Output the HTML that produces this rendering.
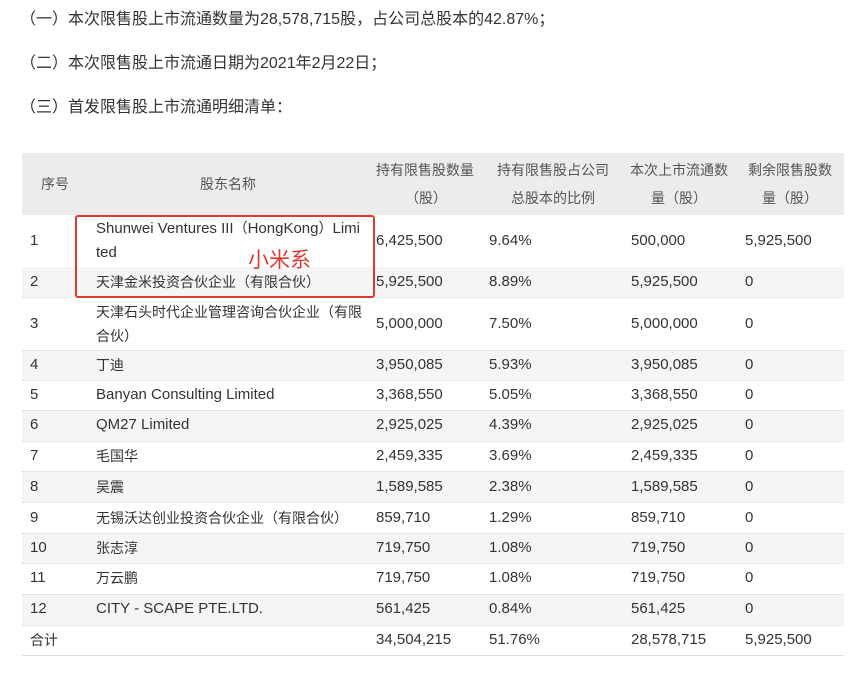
<!DOCTYPE html>
<html><head><meta charset="utf-8"><style>
body{margin:0;width:866px;height:678px;background:#fff;font-family:"Liberation Sans","Noto Sans CJK SC",sans-serif;color:#333;position:relative;overflow:hidden}
.p{position:absolute;left:20px;font-size:16px;line-height:20px;white-space:nowrap}
.bg{position:absolute;left:22px;width:822px}
.t{position:absolute;font-size:15px;line-height:26px;white-space:nowrap}
.c{font-size:14px}
.h{font-size:14px;color:#555}
.sep{position:absolute;left:22px;width:822px;border-top:1px dotted #d8d8d8}
</style></head><body>
<div class="p" style="top:10px">（一）本次限售股上市流通数量为28,578,715股，占公司总股本的42.87%；</div>
<div class="p" style="top:54px">（二）本次限售股上市流通日期为2021年2月22日；</div>
<div class="p" style="top:98px">（三）首发限售股上市流通明细清单：</div>

<div class="bg" style="top:153px;height:62px;background:#ececec"></div>
<div class="bg" style="top:267px;height:30px;background:#f5f5f5"></div>
<div class="bg" style="top:350px;height:30px;background:#f5f5f5"></div>
<div class="bg" style="top:410px;height:31px;background:#f5f5f5"></div>
<div class="bg" style="top:471px;height:31px;background:#f5f5f5"></div>
<div class="bg" style="top:533px;height:30px;background:#f5f5f5"></div>
<div class="bg" style="top:594px;height:31px;background:#f5f5f5"></div>
<div class="sep" style="top:297px"></div><div class="sep" style="top:350px"></div><div class="sep" style="top:380px"></div><div class="sep" style="top:410px"></div><div class="sep" style="top:441px"></div><div class="sep" style="top:471px"></div><div class="sep" style="top:502px"></div><div class="sep" style="top:533px"></div><div class="sep" style="top:563px"></div><div class="sep" style="top:594px"></div><div class="sep" style="top:625px"></div>
<div class="bg" style="top:655px;border-top:1px solid #ddd"></div>

<div class="t h" style="left:41px;top:171px">序号</div>
<div class="t h" style="left:200px;top:171px">股东名称</div>
<div class="t h" style="left:376px;top:157px">持有限售股数量</div>
<div class="t h" style="left:405px;top:185px">（股）</div>
<div class="t h" style="left:497px;top:157px">持有限售股占公司</div>
<div class="t h" style="left:511px;top:185px">总股本的比例</div>
<div class="t h" style="left:630px;top:157px">本次上市流通数</div>
<div class="t h" style="left:651px;top:185px">量（股）</div>
<div class="t h" style="left:748px;top:157px">剩余限售股数</div>
<div class="t h" style="left:762px;top:185px">量（股）</div>

<div class="t" style="left:30px;top:228px">1</div>
<div class="t" style="left:96px;top:216px;line-height:24px">Shunwei Ventures III<span class="c">（</span>HongKong<span class="c">）</span>Limi<br>ted</div>
<div class="t" style="left:376px;top:228px">6,425,500</div><div class="t" style="left:489px;top:228px">9.64%</div><div class="t" style="left:631px;top:228px">500,000</div><div class="t" style="left:745px;top:228px">5,925,500</div>

<div class="t" style="left:30px;top:269px">2</div><div class="t c" style="left:96px;top:269px">天津金米投资合伙企业（有限合伙）</div>
<div class="t" style="left:376px;top:269px">5,925,500</div><div class="t" style="left:489px;top:269px">8.89%</div><div class="t" style="left:631px;top:269px">5,925,500</div><div class="t" style="left:745px;top:269px">0</div>

<div class="t" style="left:30px;top:311px">3</div>
<div class="t c" style="left:96px;top:300px;line-height:24px">天津石头时代企业管理咨询合伙企业（有限<br>合伙）</div>
<div class="t" style="left:376px;top:311px">5,000,000</div><div class="t" style="left:489px;top:311px">7.50%</div><div class="t" style="left:631px;top:311px">5,000,000</div><div class="t" style="left:745px;top:311px">0</div>

<div class="t" style="left:30px;top:352px">4</div><div class="t c" style="left:96px;top:352px">丁迪</div><div class="t" style="left:376px;top:352px">3,950,085</div><div class="t" style="left:489px;top:352px">5.93%</div><div class="t" style="left:631px;top:352px">3,950,085</div><div class="t" style="left:745px;top:352px">0</div>
<div class="t" style="left:30px;top:382px">5</div><div class="t" style="left:96px;top:382px">Banyan Consulting Limited</div><div class="t" style="left:376px;top:382px">3,368,550</div><div class="t" style="left:489px;top:382px">5.05%</div><div class="t" style="left:631px;top:382px">3,368,550</div><div class="t" style="left:745px;top:382px">0</div>
<div class="t" style="left:30px;top:412px">6</div><div class="t" style="left:96px;top:412px">QM27 Limited</div><div class="t" style="left:376px;top:412px">2,925,025</div><div class="t" style="left:489px;top:412px">4.39%</div><div class="t" style="left:631px;top:412px">2,925,025</div><div class="t" style="left:745px;top:412px">0</div>
<div class="t" style="left:30px;top:443px">7</div><div class="t c" style="left:96px;top:443px">毛国华</div><div class="t" style="left:376px;top:443px">2,459,335</div><div class="t" style="left:489px;top:443px">3.69%</div><div class="t" style="left:631px;top:443px">2,459,335</div><div class="t" style="left:745px;top:443px">0</div>
<div class="t" style="left:30px;top:474px">8</div><div class="t c" style="left:96px;top:474px">吴震</div><div class="t" style="left:376px;top:474px">1,589,585</div><div class="t" style="left:489px;top:474px">2.38%</div><div class="t" style="left:631px;top:474px">1,589,585</div><div class="t" style="left:745px;top:474px">0</div>
<div class="t" style="left:30px;top:505px">9</div><div class="t c" style="left:96px;top:505px">无锡沃达创业投资合伙企业（有限合伙）</div><div class="t" style="left:376px;top:505px">859,710</div><div class="t" style="left:489px;top:505px">1.29%</div><div class="t" style="left:631px;top:505px">859,710</div><div class="t" style="left:745px;top:505px">0</div>
<div class="t" style="left:30px;top:535px">10</div><div class="t c" style="left:96px;top:535px">张志淳</div><div class="t" style="left:376px;top:535px">719,750</div><div class="t" style="left:489px;top:535px">1.08%</div><div class="t" style="left:631px;top:535px">719,750</div><div class="t" style="left:745px;top:535px">0</div>
<div class="t" style="left:30px;top:565px">11</div><div class="t c" style="left:96px;top:565px">万云鹏</div><div class="t" style="left:376px;top:565px">719,750</div><div class="t" style="left:489px;top:565px">1.08%</div><div class="t" style="left:631px;top:565px">719,750</div><div class="t" style="left:745px;top:565px">0</div>
<div class="t" style="left:30px;top:596px">12</div><div class="t" style="left:96px;top:596px">CITY - SCAPE PTE.LTD.</div><div class="t" style="left:376px;top:596px">561,425</div><div class="t" style="left:489px;top:596px">0.84%</div><div class="t" style="left:631px;top:596px">561,425</div><div class="t" style="left:745px;top:596px">0</div>
<div class="t c" style="left:30px;top:627px">合计</div><div class="t" style="left:376px;top:627px">34,504,215</div><div class="t" style="left:489px;top:627px">51.76%</div><div class="t" style="left:631px;top:627px">28,578,715</div><div class="t" style="left:745px;top:627px">5,925,500</div>

<div style="position:absolute;left:75px;top:215px;width:296px;height:79px;border:2px solid #e03a32;border-radius:3px"></div>
<div style="position:absolute;left:248px;top:247px;font-size:21px;line-height:28px;color:#e03a32">小米系</div>
</body></html>
